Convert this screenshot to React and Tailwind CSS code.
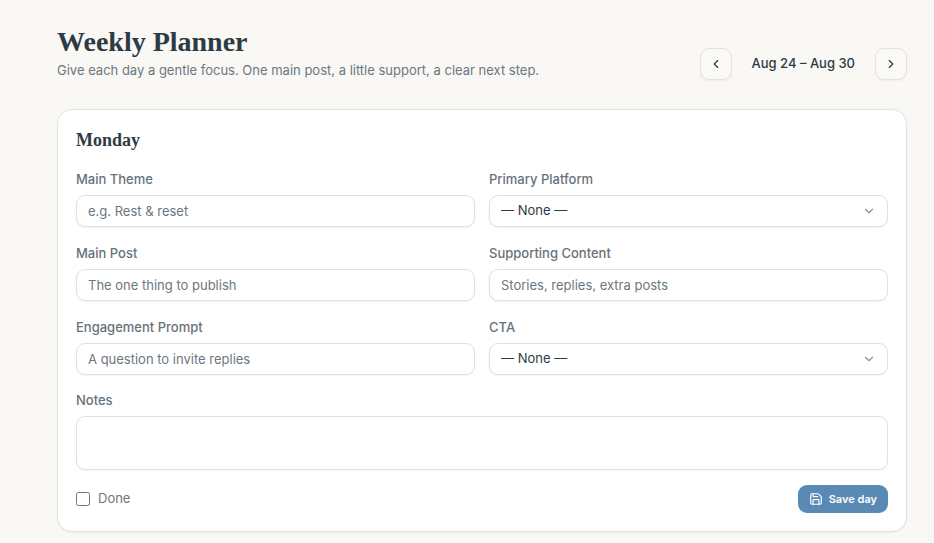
import { useState } from 'react';
import { ChevronDown, ChevronLeft, ChevronRight, Save } from 'lucide-react';

const control = "w-full rounded-[9px] border border-[#dfe0e1] bg-white px-[11px] text-[13px] text-[#2d3b45] shadow-xs outline-none placeholder:text-[#6b7780] focus:border-[#588ab3]";

function Field({ id, label, children }) {
    return (
        <div className="flex flex-col gap-1.5">
            <label htmlFor={id} className="text-[13px] leading-5 font-medium text-[#68727a]">
                {label}
            </label>
            {children}
        </div>
    );
}

function TextField({ id, label, placeholder }) {
    return (
        <Field id={id} label={label}>
            <input id={id} type="text" placeholder={placeholder} className={`${control} h-8`} />
        </Field>
    );
}

function SelectField({ id, label, options }) {
    return (
        <Field id={id} label={label}>
            <div className="relative">
                <select id={id} className={`${control} h-8 appearance-none`}>
                    <option value="">— None —</option>
                    {options.map((option) => (
                        <option key={option}>{option}</option>
                    ))}
                </select>
                <ChevronDown className="pointer-events-none absolute inset-y-0 right-3 my-auto size-3.5 text-[#8b9094]" />
            </div>
        </Field>
    );
}

function WeekButton({ label, onClick, children }) {
    return (
        <button
            type="button"
            aria-label={label}
            onClick={onClick}
            className="flex size-8 items-center justify-center rounded-[9px] border border-[#e3e2de] bg-[#faf9f6] text-[#2d3b45] shadow-xs cursor-pointer"
        >
            {children}
        </button>
    );
}

// "Aug 24 – Aug 30"
const formatWeek = (offset) => {
    const format = (day) =>
        new Date(2026, 7, day + offset * 7).toLocaleDateString('en-US', { month: 'short', day: 'numeric' });
    return `${format(24)} – ${format(30)}`;
};

export default function App() {
    const [week, setWeek] = useState(0);
    const [done, setDone] = useState(false);

    return (
        <main className="min-h-screen bg-[#f9f8f5] pt-6 pr-[27px] pb-[11px] pl-[57px] font-['Inter',sans-serif] text-[#2d3b45]">

            {/* HEADER */}
            <header className="mb-[29px] flex items-end justify-between">
                <div>
                    <h1 className="font-['Liberation_Serif',serif] text-[28px] leading-9 font-bold">
                        Weekly Planner
                    </h1>
                    <p className="text-[13px] leading-5 text-[#6b7780]">
                        Give each day a gentle focus. One main post, a little support, a clear next step.
                    </p>
                </div>

                <div className="flex items-center gap-5">
                    <WeekButton label="Previous week" onClick={() => setWeek(week - 1)}>
                        <ChevronLeft className="size-3.5" />
                    </WeekButton>
                    <span className="text-[13px] font-medium">{formatWeek(week)}</span>
                    <WeekButton label="Next week" onClick={() => setWeek(week + 1)}>
                        <ChevronRight className="size-3.5" />
                    </WeekButton>
                </div>
            </header>

            {/* DAY CARD */}
            <form
                onSubmit={(e) => e.preventDefault()}
                className="rounded-[15px] border border-[#e3e2de] bg-white p-[18px] shadow-xs"
            >
                <h2 className="mb-4 font-['Liberation_Serif',serif] text-[18px] leading-[25px] font-bold">
                    Monday
                </h2>

                <div className="grid grid-cols-2 gap-x-3.5 gap-y-4">
                    <TextField id="theme" label="Main Theme" placeholder="e.g. Rest & reset" />
                    <SelectField id="platform" label="Primary Platform" options={['Instagram', 'LinkedIn', 'TikTok']} />
                    <TextField id="post" label="Main Post" placeholder="The one thing to publish" />
                    <TextField id="support" label="Supporting Content" placeholder="Stories, replies, extra posts" />
                    <TextField id="prompt" label="Engagement Prompt" placeholder="A question to invite replies" />
                    <SelectField id="cta" label="CTA" options={['Comment', 'Share', 'Subscribe']} />
                </div>

                <div className="mt-[15px]">
                    <Field id="notes" label="Notes">
                        <textarea id="notes" className={`${control} block h-[54px] resize-none py-2`} />
                    </Field>
                </div>

                <div className="mt-[15px] flex items-center justify-between">
                    <label className="flex items-center gap-2 text-[13px] text-[#6b7780]">
                        <input
                            type="checkbox"
                            checked={done}
                            onChange={(e) => setDone(e.target.checked)}
                            className="size-3.5 accent-[#588ab3]"
                        />
                        Done
                    </label>

                    <button
                        type="submit"
                        className="flex h-7 items-center gap-1.5 rounded-[9px] bg-[#588ab3] px-[11px] text-[11px] font-semibold text-white cursor-pointer"
                    >
                        <Save className="size-3.5" />
                        Save day
                    </button>
                </div>
            </form>

        </main>
    );
}
